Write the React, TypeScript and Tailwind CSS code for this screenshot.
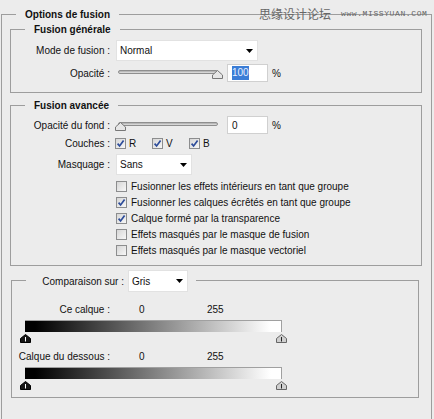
import type { ReactNode } from 'react';

const LINE = 'border-[#9d9d9d]';

function Arrow() {
  return (
    <svg width="7" height="4" viewBox="0 0 7 4" className="shrink-0">
      <path d="M0 0H7L3.5 4Z" fill="#000" />
    </svg>
  );
}

function Select({ value, width }: { value: string; width: string }) {
  return (
    <div className={`${width} h-[21px] bg-white border border-[#e2e2e2] flex items-center justify-between pl-[3px] pr-[4px]`}>
      <span>{value}</span>
      <Arrow />
    </div>
  );
}

function Check({ on }: { on?: boolean }) {
  return (
    <div className="w-[11px] h-[11px] shrink-0 border border-[#8c8d8e] bg-[linear-gradient(135deg,#d6d6d6,#f7f7f7)] flex items-center justify-center">
      {on && (
        <svg width="9" height="9" viewBox="0 0 9 9">
          <path d="M1.6 4.6L3.6 7L7.6 1.6" fill="none" stroke="#2d4c9a" strokeWidth="1.7" />
        </svg>
      )}
    </div>
  );
}

function SliderThumb() {
  return (
    <svg width="11" height="9" viewBox="0 0 11 9">
      <path d="M0.5 8.5V5L5.5 0.5L10.5 5V8.5Z" fill="#e6e6e6" stroke="#777" />
    </svg>
  );
}

function Slider({ at }: { at: 'start' | 'end' }) {
  return (
    <div className="relative w-[108px] h-[18px] ml-[4px] shrink-0">
      <div className="absolute left-[4px] right-[4px] top-[6px] h-[4px] rounded-full border border-[#8e8e8e] bg-[linear-gradient(#a9a9a9,#e4e4e4)]" />
      <div className={`absolute top-[6px] ${at === 'start' ? 'left-[1px]' : 'right-[-1px]'}`}>
        <SliderThumb />
      </div>
    </div>
  );
}

function GradThumb({ dark }: { dark?: boolean }) {
  return (
    <svg width="11" height="9" viewBox="0 0 11 9">
      <path d="M0.5 8.5V4.5L5.5 0.5L10.5 4.5V8.5Z" fill={dark ? '#151515' : '#cfcfcf'} stroke={dark ? '#000' : '#666'} />
      <path d="M5.5 3V7.5" stroke={dark ? '#fff' : '#222'} />
    </svg>
  );
}

function Row({ label, className = '', children }: { label: string; className?: string; children: ReactNode }) {
  return (
    <div className={`flex items-center ${className}`}>
      <span className="w-[99px] shrink-0 text-right whitespace-nowrap">{label}</span>
      {children}
    </div>
  );
}

function Field({ children, highlight }: { children: string; highlight?: boolean }) {
  return (
    <>
      <div className="ml-[5px] w-[41px] h-[18px] bg-white border border-[#d0d0d0] flex items-center pl-[4px]">
        <span className={highlight ? 'bg-[#3b7dd6] text-[#e8efff] leading-[14px]' : ''}>{children}</span>
      </div>
      <span className="ml-[4px]">%</span>
    </>
  );
}

function GradientRow({ label }: { label: string }) {
  return (
    <>
      <div className="flex h-[13px] items-center">
        <span className="w-[98px] shrink-0 text-right whitespace-nowrap">{label}</span>
        <span className="ml-[29px] w-[68px]">0</span>
        <span>255</span>
      </div>
      <div className="mt-[4px] ml-[13px] w-[257px] h-[12px] border-t border-r border-[#a0a0a0] bg-[linear-gradient(to_right,#000_4%,#fff_96%)]" />
      <div className="mt-[2px] ml-[8px] w-[267px] flex justify-between">
        <GradThumb dark />
        <GradThumb />
      </div>
    </>
  );
}

export default function App() {
  return (
    <div className="relative w-[434px] h-[419px] overflow-hidden bg-[#ececec] pt-[8px] font-['Liberation_Sans',Arial,sans-serif] text-[10px] leading-[13px] text-[#111]">
      <fieldset className={`ml-[1px] w-[431px] border border-b-0 ${LINE} pb-[40px]`}>
        <legend className="ml-[14px] px-[9px] font-bold">Options de fusion</legend>

        <fieldset className={`mt-[2px] ml-[8px] w-[412px] border ${LINE} pt-[4px] pb-[10px]`}>
          <legend className="ml-[14px] px-[9px] font-bold">Fusion générale</legend>
          <Row label="Mode de fusion :" className="h-[21px]">
            <div className="ml-[6px]">
              <Select value="Normal" width="w-[142px]" />
            </div>
          </Row>
          <Row label="Opacité :" className="mt-[3px] h-[18px]">
            <Slider at="end" />
            <Field highlight>100</Field>
          </Row>
        </fieldset>

        <fieldset className={`mt-[6px] ml-[8px] w-[412px] border ${LINE} pt-[4px] pb-[7px]`}>
          <legend className="ml-[14px] px-[9px] font-bold">Fusion avancée</legend>
          <Row label="Opacité du fond :" className="h-[18px]">
            <Slider at="start" />
            <Field>0</Field>
          </Row>
          <Row label="Couches :" className="mt-[1px] h-[16px]">
            <div className="ml-[5px] flex">
              {['R', 'V', 'B'].map((c) => (
                <div key={c} className="w-[37px] flex items-center gap-[3px]">
                  <Check on />
                  <span>{c}</span>
                </div>
              ))}
            </div>
          </Row>
          <Row label="Masquage :" className="mt-[3px] h-[21px]">
            <div className="ml-[6px]">
              <Select value="Sans" width="w-[76px]" />
            </div>
          </Row>
          <div className="mt-[3px] ml-[105px] flex flex-col">
            {[
              ['Fusionner les effets intérieurs en tant que groupe', false],
              ['Fusionner les calques écrêtés en tant que groupe', true],
              ['Calque formé par la transparence', true],
              ['Effets masqués par le masque de fusion', false],
              ['Effets masqués par le masque vectoriel', false],
            ].map(([t, on]) => (
              <div key={t as string} className="h-[16px] flex items-center gap-[4px]">
                <Check on={on as boolean} />
                <span>{t as string}</span>
              </div>
            ))}
          </div>
        </fieldset>

        <fieldset className={`mt-[2px] ml-[9px] w-[408px] border ${LINE} pb-[7px]`}>
          <legend className="ml-[14px] pl-[2px] pr-[8px] pt-[2px]">
            <div className="flex items-center">
              <span className="w-[96px] text-right">Comparaison sur :</span>
              <div className="ml-[4px]">
                <Select value="Gris" width="w-[60px] h-[22px]" />
              </div>
            </div>
          </legend>
          <div className="mt-[11px]">
            <GradientRow label="Ce calque :" />
          </div>
          <div className="mt-[7px]">
            <GradientRow label="Calque du dessous :" />
          </div>
        </fieldset>
      </fieldset>

      <div className="absolute top-[7px] left-[259px] flex items-center text-[#666]">
        <span className="text-[12px] leading-[14px] font-['Noto_Sans_CJK_SC',sans-serif]">思缘设计论坛</span>
        <span className="ml-[10px] text-[8px] leading-[10px] font-['Liberation_Mono',monospace] tracking-[0.6px]">www.MISSYUAN.COM</span>
      </div>
    </div>
  );
}
